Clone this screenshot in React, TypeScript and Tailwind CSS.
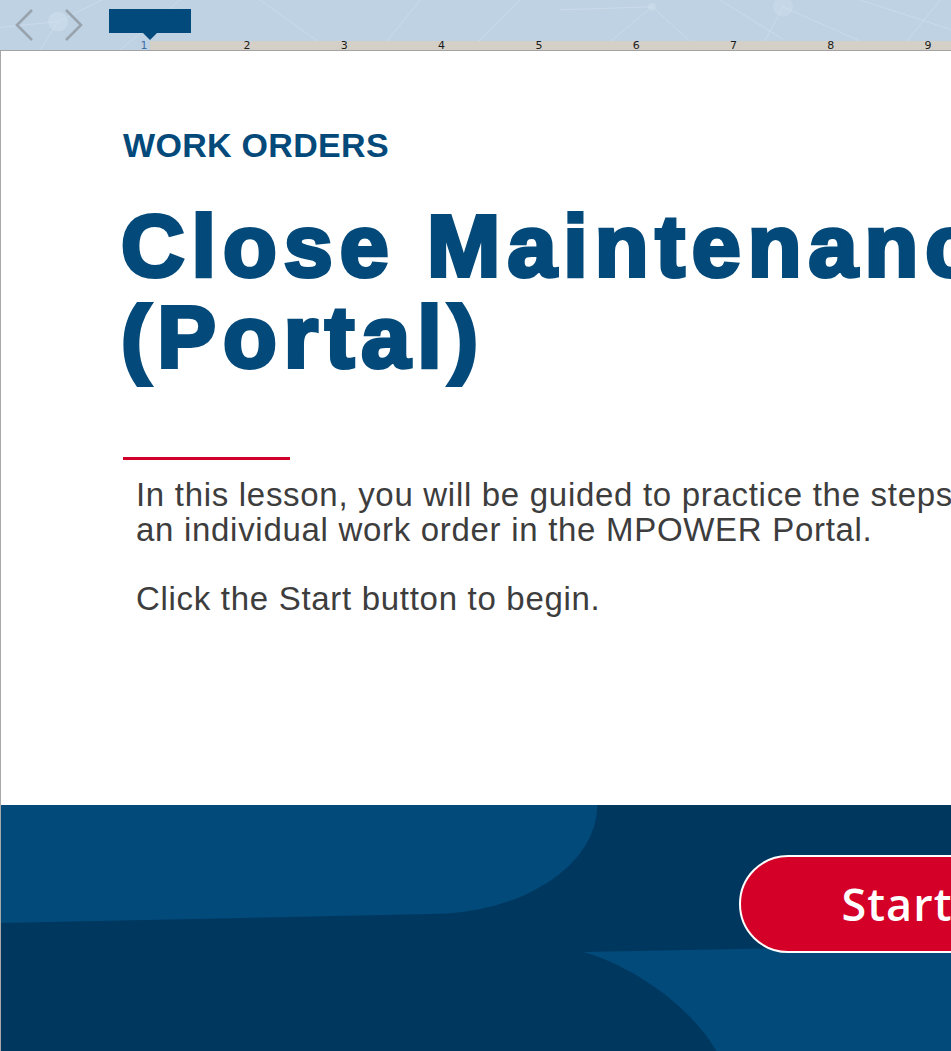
import React from 'react';

const rulerMarks = ['2', '3', '4', '5', '6', '7', '8', '9'];

function Chevron({ dir }: { dir: 'left' | 'right' }) {
  return (
    <svg width="20" height="32" viewBox="0 0 20 32" fill="none" className="shrink-0">
      <path
        d={dir === 'left' ? 'M18 1 L3 16 L18 31' : 'M2 1 L17 16 L2 31'}
        stroke="#98a3ad"
        strokeWidth="2.6"
        strokeLinejoin="miter"
      />
    </svg>
  );
}

function HeaderBackdrop() {
  // faint network pattern behind the toolbar
  return (
    <svg className="absolute inset-0 h-full w-full" viewBox="0 0 951 51" preserveAspectRatio="none">
      <g stroke="#ffffff" strokeOpacity="0.18" strokeWidth="1">
        <line x1="0" y1="28" x2="58" y2="22" />
        <line x1="58" y1="22" x2="110" y2="-4" />
        <line x1="58" y1="22" x2="40" y2="51" />
        <line x1="120" y1="51" x2="180" y2="0" />
        <line x1="260" y1="0" x2="330" y2="51" />
        <line x1="380" y1="51" x2="420" y2="0" />
        <line x1="470" y1="51" x2="520" y2="0" />
        <line x1="560" y1="10" x2="652" y2="7" />
        <line x1="652" y1="7" x2="700" y2="51" />
        <line x1="652" y1="7" x2="600" y2="51" />
        <line x1="720" y1="0" x2="783" y2="40" />
        <line x1="783" y1="7" x2="880" y2="51" />
        <line x1="783" y1="7" x2="760" y2="51" />
        <line x1="860" y1="0" x2="951" y2="30" />
        <line x1="900" y1="51" x2="940" y2="0" />
      </g>
      <circle cx="58" cy="22" r="10" fill="#d3e4f0" fillOpacity="0.45" />
      <circle cx="652" cy="7" r="4" fill="#d3e4f0" fillOpacity="0.4" />
      <circle cx="783" cy="7" r="10" fill="#d3e4f0" fillOpacity="0.35" />
    </svg>
  );
}

function Toolbar() {
  return (
    <div className="relative h-[51px] shrink-0 bg-[#bfd2e4] border-b border-[#a3a3a3]">
      <HeaderBackdrop />
      <div className="relative flex h-[41px] items-start pt-[9px]">
        <div className="ml-[14px]">
          <Chevron dir="left" />
        </div>
        <div className="ml-[30px]">
          <Chevron dir="right" />
        </div>
        <div className="ml-[25px] flex flex-col items-center">
          <div className="h-[24px] w-[82px] bg-[#014a7b]" />
          <svg width="14" height="7" viewBox="0 0 14 7" className="block">
            <path d="M0 0 H14 L7 7 Z" fill="#014a7b" />
          </svg>
        </div>
      </div>
      <div className="relative grid h-[9px]">
        <div className="col-start-1 row-start-1 ml-[150px] bg-[#d4d0c8]" />
        <div className="col-start-1 row-start-1 flex items-center pl-[139px] font-['DejaVu_Sans',sans-serif] text-[11px] leading-[9px]">
          <span className="w-[10px] text-center text-[#3e6ea6]">1</span>
          {rulerMarks.map((n, i) => (
            <span
              key={n}
              className={`w-[10px] text-center text-[#1a1a1a] ${i === 0 ? 'ml-[93px]' : 'ml-[87.3px]'}`}
            >
              {n}
            </span>
          ))}
        </div>
      </div>
    </div>
  );
}

function BottomBand() {
  return (
    <div className="relative h-[246px] shrink-0 overflow-hidden bg-[#00375f]">
      <svg className="absolute inset-0 h-full w-full" viewBox="0 0 951 246" preserveAspectRatio="none">
        <path d="M0 0 H597 A167 109 0 0 1 430 109 L0 118 Z" fill="#024a7a" />
        <path d="M583 147 L951 140 V246 H716 C690 200 630 160 583 147 Z" fill="#024a7a" />
      </svg>
      <div className="relative pl-[738px] pt-[50px]">
        <button className="flex h-[98px] w-[316px] shrink-0 items-center justify-center rounded-full border-2 border-white bg-[#d50027] font-['Open_Sans',sans-serif] text-[45px] font-semibold tracking-[1px] text-white">
          Start
        </button>
      </div>
    </div>
  );
}

export default function App() {
  return (
    <div className="flex h-[1051px] w-[951px] flex-col overflow-hidden bg-white font-['Liberation_Sans',Arial,sans-serif]">
      <Toolbar />
      <div className="flex flex-1 flex-col border-l border-[#a8a8a8] overflow-hidden">
        <main className="flex-1 overflow-hidden pl-[122px] pt-[77px]">
          <p className="whitespace-nowrap text-[34px] font-bold leading-[34px] tracking-[0.3px] text-[#034a7b]">WORK ORDERS</p>
          <h1 className="-ml-[2px] mt-[37.5px] whitespace-nowrap text-[88px] font-bold leading-[91px] tracking-[7px] text-[#034a7b] [-webkit-text-stroke:4px_#034a7b]">
            Close Maintenance Work Order
            <br />
            (Portal)
          </h1>
          <div className="mt-[75.5px] h-[3px] w-[167px] bg-[#d1002b]" />
          <div className="ml-[13px] mt-[18px] whitespace-nowrap text-[33px] leading-[34.5px] tracking-[0.7px] text-[#3d3d3d]">
            <p>In this lesson, you will be guided to practice the steps to close</p>
            <p>an individual work order in the MPOWER Portal.</p>
            <p className="mt-[34.5px]">Click the Start button to begin.</p>
          </div>
        </main>
        <BottomBand />
      </div>
    </div>
  );
}
